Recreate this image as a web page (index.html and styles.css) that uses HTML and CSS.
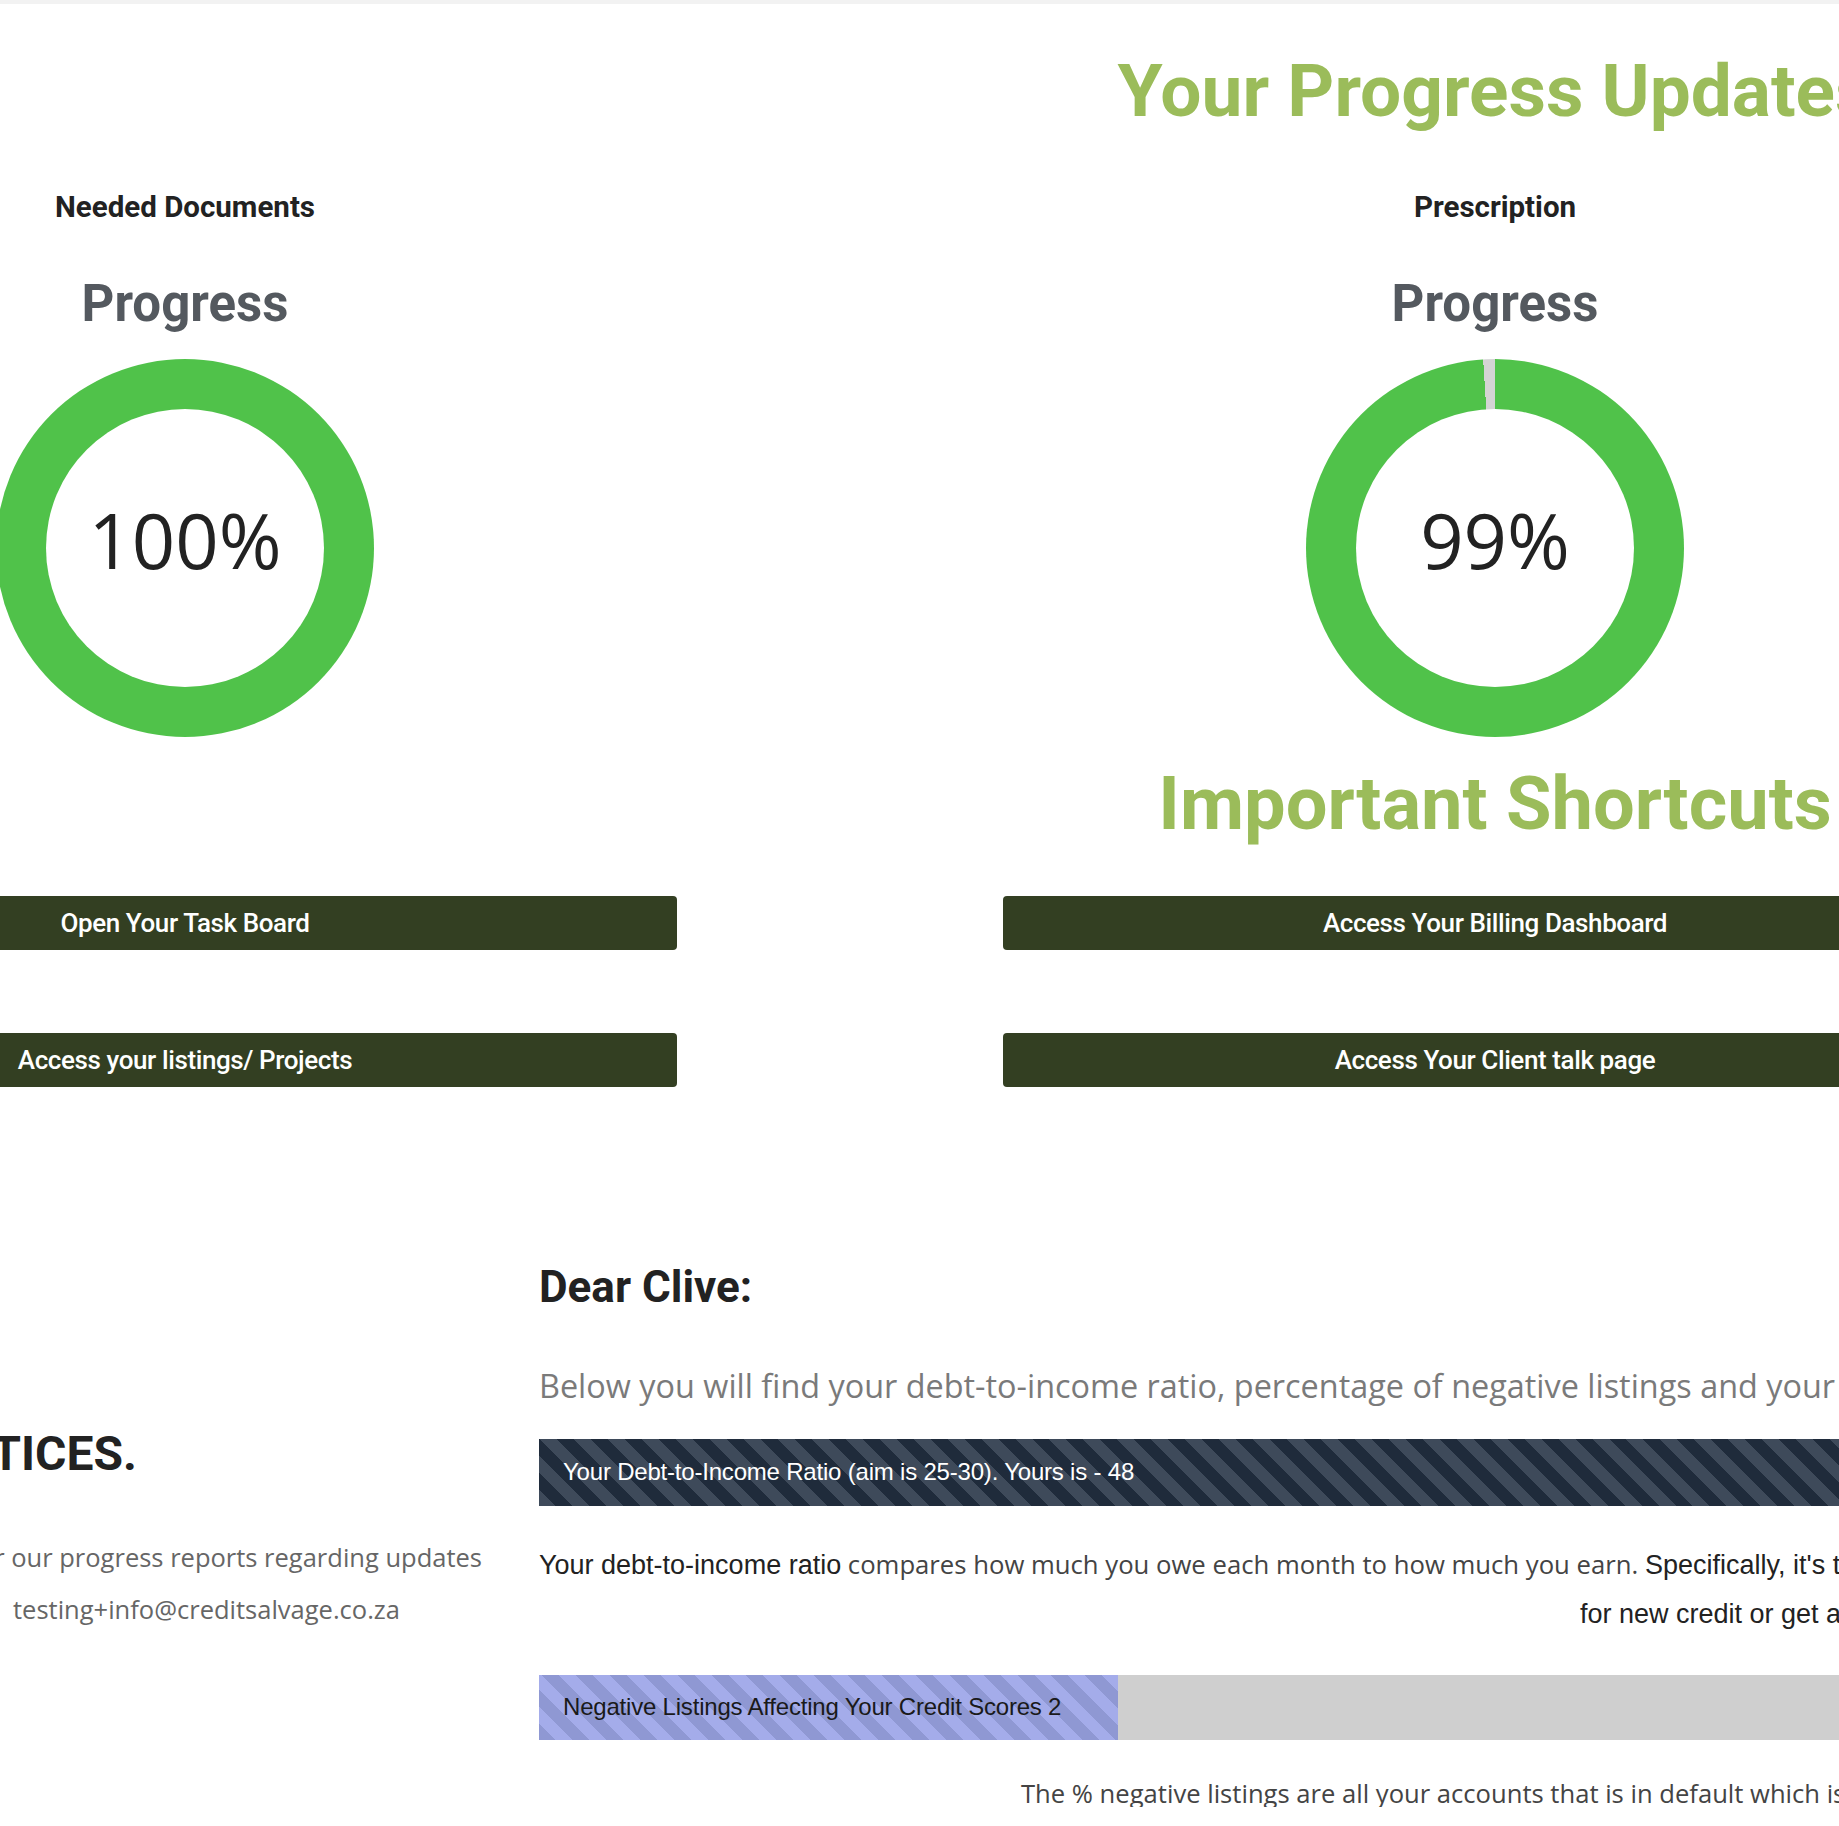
FILE: index.html
```html
<!DOCTYPE html>
<html lang="en">
<head>
    <meta charset="UTF-8">
    <meta name="viewport" content="width=device-width, initial-scale=1.0">
    <title>Your Progress Updates</title>
    <link rel="stylesheet" href="styles.css">
</head>
<body>
    <div class="topbar"></div>

    <div class="dashboard">
        <div></div>
        <h1 class="headline">Your Progress Updates</h1>

        <div class="tracker">
            <h4>Needed Documents</h4>
            <h2>Progress</h2>
            <div class="donut" style="--pct: 100">
                <div class="donut-hole"><span>100%</span></div>
            </div>
        </div>
        <div class="tracker">
            <h4>Prescription</h4>
            <h2>Progress</h2>
            <div class="donut" style="--pct: 99">
                <div class="donut-hole"><span>99%</span></div>
            </div>
        </div>

        <div></div>
        <h1 class="headline shortcuts">Important Shortcuts</h1>

        <a class="shortcut first" href="#">Open Your Task Board</a>
        <a class="shortcut first" href="#">Access Your Billing Dashboard</a>
        <a class="shortcut second" href="#">Access your listings/ Projects</a>
        <a class="shortcut second" href="#">Access Your Client talk page</a>
    </div>

    <div class="report">
        <div class="notices">
            <h2>IMPORTANT NOTICES.</h2>
            <p class="notice-line">Please look out for our progress reports regarding updates</p>
            <p class="notice-line email">or contact us at   testing+info@creditsalvage.co.za</p>
        </div>

        <div class="letter">
            <h2>Dear Clive:</h2>
            <p class="intro">Below you will find your debt-to-income ratio, percentage of negative listings and your credit score.</p>

            <div class="bar bar-dark">
                <div class="bar-fill" style="width: 100%">Your Debt-to-Income Ratio (aim is 25-30). Yours is - 48</div>
            </div>

            <p class="ratio-note"><span class="plain">Your debt-to-income ratio</span> compares how much you owe each month to how much you earn. <span class="plain">Specifically, it's the percentage of your gross monthly income that goes to debt.</span><span class="note-cont plain">for new credit or get a loan.</span></p>

            <div class="bar bar-blue">
                <div class="bar-fill" style="width: 24.3%">Negative Listings Affecting Your Credit Scores 2</div>
            </div>

            <p class="footnote">The % negative listings are all your accounts that is in default which is affecting your score.</p>
        </div>
    </div>
</body>
</html>
```

FILE: styles.css
```css
body {
    margin: 0;
    background: #fff;
    font-family: Roboto, "Liberation Sans", sans-serif;
    color: #222;
    overflow: hidden;
}
.topbar {
    height: 4px;
    background: #f2f2f2;
}

/* progress + shortcuts */
.dashboard {
    display: grid;
    grid-template-columns: 984px 984px;
    column-gap: 326px;
    margin-left: -307px;
    align-items: start;
}
.headline {
    margin: 51px 0 0;
    font-size: 73px;
    line-height: 1;
    font-weight: 700;
    color: #9bbc5a;
    text-align: center;
    white-space: nowrap;
}
.headline.shortcuts {
    margin-top: 30px;
    font-size: 74px;
}
.tracker {
    text-align: center;
}
.tracker h4 {
    margin: 65px 0 0;
    font-size: 29.5px;
    line-height: 1;
    font-weight: 700;
    color: #222;
}
.tracker h2 {
    margin: 55px 0 0;
    font-size: 51px;
    line-height: 1;
    font-weight: 700;
    color: #54595f;
}
.donut {
    width: 378px;
    height: 378px;
    margin: 30px auto 0;
    border-radius: 50%;
    background: conic-gradient(#50c24a calc(var(--pct) * 1%), #d4d4d4 0);
    display: flex;
    align-items: center;
    justify-content: center;
}
.donut-hole {
    width: 278px;
    height: 278px;
    border-radius: 50%;
    background: #fff;
    display: flex;
    align-items: center;
    justify-content: center;
    font-family: "Open Sans", sans-serif;
    font-size: 76px;
    color: #222;
}
.donut-hole span {
    margin-top: -16px;
}
.shortcut {
    display: block;
    height: 54px;
    line-height: 54px;
    background: #333f22;
    color: #fff;
    border-radius: 4px;
    text-align: center;
    text-decoration: none;
    font-size: 26px;
    font-weight: 500;
    letter-spacing: -0.4px;
}
.shortcut.first {
    margin-top: 55px;
}
.shortcut.second {
    margin-top: 83px;
}

/* letter / report */
.report {
    display: grid;
    grid-template-columns: 993px 2382px;
    column-gap: 57px;
    margin: 178px 0 0 -511px;
    align-items: start;
}
.notices {
    text-align: right;
    white-space: nowrap;
}
.notices h2 {
    margin: 165px 345px 0 0;
    font-size: 48px;
    line-height: 1;
    font-weight: 700;
    color: #222;
}
.notice-line {
    margin: 67px 0 0;
    font-family: "Open Sans", sans-serif;
    font-size: 25.5px;
    line-height: 1;
    color: #666;
}
.notice-line.email {
    margin: 27px 82px 0 0;
    white-space: pre;
}
.letter h2 {
    margin: 0;
    font-size: 44px;
    line-height: 1;
    font-weight: 700;
    color: #222;
}
.intro {
    margin: 60px 0 0;
    font-family: "Open Sans", sans-serif;
    font-size: 32.4px;
    line-height: 1;
    color: #7a7a7a;
    white-space: nowrap;
}
.bar {
    height: 67px;
    margin-top: 38px;
    background: #cfcfcf;
}
.bar-fill {
    height: 100%;
    box-sizing: border-box;
    display: flex;
    align-items: center;
    padding-left: 24px;
    white-space: nowrap;
    font-family: "Liberation Sans", Arial, sans-serif;
    font-size: 24px;
    letter-spacing: -0.2px;
}
.bar-dark .bar-fill {
    background: repeating-linear-gradient(45deg, #3e4a5a 0 12px, #1f2b3b 12px 24px);
    color: #fff;
}
.bar-blue {
    height: 65px;
    margin-top: 36px;
}
.bar-blue .bar-fill {
    background: repeating-linear-gradient(45deg, #8f98d3 0 12px, #a4acea 12px 24px);
    color: #1a1a1a;
}
.ratio-note {
    margin: 34px 0 0;
    font-family: "Open Sans", sans-serif;
    font-size: 25.7px;
    line-height: 49px;
    color: #444;
    white-space: nowrap;
}
.ratio-note .plain {
    font-family: "Liberation Sans", Arial, sans-serif;
    font-size: 27px;
    color: #222;
}
.note-cont {
    display: block;
    padding-left: 1041px;
}
.footnote {
    margin: 41px 0 0 482px;
    font-family: "Open Sans", sans-serif;
    font-size: 25.6px;
    line-height: 1;
    color: #444;
    white-space: nowrap;
}
```
